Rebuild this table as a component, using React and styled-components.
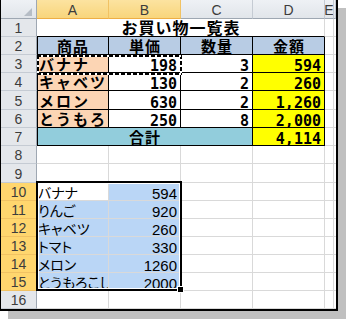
import React from "react";
import styled, { createGlobalStyle, css } from "styled-components";

const GRID = "#d9d9d9";
const ROW_HEIGHTS = [18, 18, 18, 18, 19, 18, 18, 18, 19, 18, 18, 18, 18, 18, 18, 18];
const COLS = ["A", "B", "C", "D", "E", ""];

const GlobalStyle = createGlobalStyle`
  html, body { margin: 0; padding: 0; background: #fff; }
  body { width: 346px; height: 320px; overflow: hidden; font-family: "Liberation Sans", sans-serif; }
`;

const Frame = styled.div`
  width: 335px;
  border-left: 1px solid #000;
  border-right: 2px solid #000;
  border-bottom: 2px solid #000;
  box-shadow: 8px 8px 0 #c0c0c0;
  background: #fff;
  overflow: hidden;
`;

const Sheet = styled.div`
  display: grid;
  grid-template-columns: 36px repeat(4, 72px) 9px 1fr;
  grid-template-rows: 19px ${ROW_HEIGHTS.map((h) => h + "px").join(" ")};
`;

const place = css`
  grid-row: ${(p) => p.$r + 1};
  grid-column: ${(p) => p.$c} / span ${(p) => p.$span || 1};
`;

const Corner = styled.div`
  grid-row: 1;
  grid-column: 1;
  box-sizing: border-box;
  display: flex;
  justify-content: flex-end;
  align-items: flex-end;
  padding: 0 4px 2px 0;
  background: linear-gradient(#eef1f5, #e1e5ea);
  border-right: 1px solid #9ea7b2;
  border-bottom: 1px solid #9ea7b2;
`;

const Triangle = styled.span`
  width: 0;
  height: 0;
  border-left: 8px solid transparent;
  border-bottom: 8px solid #b6bdc6;
`;

const ColHead = styled.div`
  ${place};
  box-sizing: border-box;
  display: flex;
  justify-content: center;
  align-items: flex-end;
  font: 14px/15px "Liberation Sans", sans-serif;
  color: #3c3c3c;
  overflow: hidden;
  background: ${(p) => (p.$active ? "linear-gradient(#fce3a0, #f8d57c)" : "linear-gradient(#eef1f5, #e1e5ea)")};
  border-right: 1px solid ${(p) => (p.$active ? "#f1c263" : "#c5cbd3")};
  border-bottom: 1px solid ${(p) => (p.$active ? "#eeae45" : "#9ea7b2")};
`;

const RowHead = styled.div`
  ${place};
  box-sizing: border-box;
  display: flex;
  justify-content: center;
  align-items: flex-end;
  font: 14px/15px "Liberation Sans", sans-serif;
  color: #3c3c3c;
  background: ${(p) => (p.$active ? "#ffd66e" : "#e4e7eb")};
  border-right: 1px solid ${(p) => (p.$active ? "#eeae45" : "#9ea7b2")};
  border-bottom: 1px solid ${(p) => (p.$active ? "#f1c263" : "#c5cbd3")};
`;

const fonts = {
  title: css`
    font: bold 16px/17px "Noto Sans CJK JP", sans-serif;
    letter-spacing: 1px;
    padding-left: 1px;
  `,
  head: css`
    font: bold 15px/16px "Noto Sans CJK JP", sans-serif;
    letter-spacing: 1px;
    padding-left: 1px;
  `,
  name: css`
    font: bold 15px/16px "Noto Sans CJK JP", sans-serif;
    letter-spacing: 2px;
    padding-left: 2px;
  `,
  num: css`
    font: bold 15px/12px "DejaVu Sans Mono", monospace;
    padding-right: 3px;
  `,
  text: css`
    font: 14px/15px "Noto Sans CJK JP", sans-serif;
    font-feature-settings: "palt";
    padding-left: 1px;
  `,
  value: css`
    font: 15px/12px "Liberation Sans", sans-serif;
    padding-right: 3px;
  `,
};

const justify = { left: "flex-start", center: "center", right: "flex-end" };

const Cell = styled.div`
  ${place};
  box-sizing: border-box;
  display: flex;
  align-items: flex-end;
  justify-content: ${(p) => justify[p.$align || "left"]};
  white-space: nowrap;
  overflow: hidden;
  color: #000;
  background: ${(p) => p.$bg || "#fff"};
  border-right: ${(p) => (p.$last ? "none" : `1px solid ${p.$right || GRID}`)};
  border-bottom: 1px solid ${(p) => p.$bottom || GRID};
  ${(p) => p.$edge && "box-shadow: inset 1px 0 0 #000;"}
  ${(p) => p.$font && fonts[p.$font]};
`;

const Marquee = styled.div`
  ${place};
  margin: 0 -1px -2px 0;
  z-index: 2;
  pointer-events: none;
  background:
    repeating-linear-gradient(90deg, #000 0 4px, #fff 4px 6px) top / 100% 2px no-repeat,
    repeating-linear-gradient(90deg, #000 0 4px, #fff 4px 6px) bottom / 100% 2px no-repeat,
    repeating-linear-gradient(180deg, #000 0 4px, #fff 4px 6px) left / 2px 100% no-repeat,
    repeating-linear-gradient(180deg, #000 0 4px, #fff 4px 6px) right / 2px 100% no-repeat;
`;

const Selection = styled.div`
  ${place};
  grid-row: ${(p) => p.$r + 1} / span ${(p) => p.$rows};
  position: relative;
  margin: -2px -1px 0 -1px;
  border: 2px solid #000;
  box-shadow: inset 0 0 0 1px #fff;
  z-index: 2;
  pointer-events: none;
`;

const FillHandle = styled.span`
  position: absolute;
  right: -4px;
  bottom: -4px;
  width: 5px;
  height: 5px;
  background: #000;
  border: 1px solid #fff;
`;

const items = [
  ["バナナ", "198", "3", "594"],
  ["キャベツ", "130", "2", "260"],
  ["メロン", "630", "2", "1,260"],
  ["とうもろこし", "250", "8", "2,000"],
];

const list = [
  ["バナナ", "594"],
  ["りんご", "920"],
  ["キャベツ", "260"],
  ["トマト", "330"],
  ["メロン", "1260"],
  ["とうもろこし", "2000"],
];

const PEACH = "#fcd5b4";
const BLUE = "#b8cce4";
const TEAL = "#92cddc";
const YELLOW = "#ffff00";
const SELECT = "#bad6f6";

function blanks(r, from) {
  const out = [];
  for (let c = from; c <= 6; c++) {
    out.push(<Cell key={`${r}-${c}`} $r={r} $c={c + 1} $last={c === 6} />);
  }
  return out;
}

export default function App() {
  const cells = [];

  // row 1: title
  cells.push(
    <Cell key="title" $r={1} $c={2} $span={4} $bottom="#000" $align="center" $font="title">
      お買い物一覧表
    </Cell>
  );
  cells.push(...blanks(1, 5));

  // row 2: table header
  ["商品", "単価", "数量", "金額"].forEach((t, i) =>
    cells.push(
      <Cell key={`h-${i}`} $r={2} $c={i + 2} $bg={BLUE} $right="#000" $bottom="#000" $edge={i === 0} $align="center" $font="head">
        {t}
      </Cell>
    )
  );
  cells.push(...blanks(2, 5));

  // rows 3-6: items
  items.forEach((it, i) => {
    const r = i + 3;
    cells.push(
      <Cell key={`n-${r}`} $r={r} $c={2} $bg={PEACH} $right="#000" $bottom="#000" $edge $font="name">
        {it[0]}
      </Cell>,
      <Cell key={`p-${r}`} $r={r} $c={3} $right="#000" $bottom="#000" $align="right" $font="num">
        {it[1]}
      </Cell>,
      <Cell key={`q-${r}`} $r={r} $c={4} $right="#000" $bottom="#000" $align="right" $font="num">
        {it[2]}
      </Cell>,
      <Cell key={`s-${r}`} $r={r} $c={5} $bg={YELLOW} $right="#000" $bottom="#000" $align="right" $font="num">
        {it[3]}
      </Cell>,
      ...blanks(r, 5)
    );
  });

  // row 7: total
  cells.push(
    <Cell key="total" $r={7} $c={2} $span={3} $bg={TEAL} $right="#000" $bottom="#000" $edge $align="center" $font="head">
      合計
    </Cell>,
    <Cell key="total-v" $r={7} $c={5} $bg={YELLOW} $right="#000" $bottom="#000" $align="right" $font="num">
      4,114
    </Cell>,
    ...blanks(7, 5)
  );

  // rows 8-9
  cells.push(...blanks(8, 1), ...blanks(9, 1));

  // rows 10-15: pasted list
  list.forEach((it, i) => {
    const r = i + 10;
    cells.push(
      <Cell key={`l-${r}`} $r={r} $c={2} $bg={i === 0 ? "#fff" : SELECT} $font="text">
        {it[0]}
      </Cell>,
      <Cell key={`v-${r}`} $r={r} $c={3} $bg={SELECT} $align="right" $font="value">
        {it[1]}
      </Cell>,
      ...blanks(r, 3)
    );
  });

  cells.push(...blanks(16, 1));

  return (
    <>
      <GlobalStyle />
      <Frame>
        <Sheet>
          <Corner>
            <Triangle />
          </Corner>
          {COLS.map((c, i) => (
            <ColHead key={`c-${i}`} $r={0} $c={i + 2} $active={c === "A" || c === "B"}>
              {c}
            </ColHead>
          ))}
          {ROW_HEIGHTS.map((_, i) => (
            <RowHead key={`r-${i}`} $r={i + 1} $c={1} $active={i + 1 >= 10 && i + 1 <= 15}>
              {i + 1}
            </RowHead>
          ))}
          {cells}
          <Marquee $r={3} $c={2} $span={2} />
          <Selection $r={10} $rows={6} $c={2} $span={2}>
            <FillHandle />
          </Selection>
        </Sheet>
      </Frame>
    </>
  );
}
